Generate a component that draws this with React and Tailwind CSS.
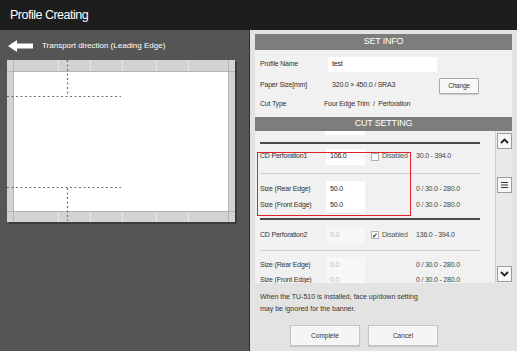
import React from 'react';

const font = { fontFamily: '"Liberation Sans", Arial, sans-serif' };

const Arrow = () => (
  <svg width="25" height="12" viewBox="0 0 25 12">
    <polygon points="0,6 9,0 9,3.5 25,3.5 25,8.5 9,8.5 9,12" fill="#fff" />
  </svg>
);

const Paper = () => (
  <svg width="231" height="165" viewBox="0 0 231 165">
    <rect x="2" y="2" width="228" height="162" fill="#3c3c3c" />
    <rect x="0" y="0" width="228" height="162" fill="#fff" />
    <rect x="0" y="0" width="228" height="11" fill="#d3d3d3" />
    <rect x="0" y="152" width="228" height="10" fill="#d3d3d3" />
    <rect x="0" y="0" width="7" height="162" fill="#d3d3d3" />
    <rect x="221" y="0" width="7" height="162" fill="#d3d3d3" />
    <line x1="0" y1="11.5" x2="228" y2="11.5" stroke="#b4b4b4" />
    <line x1="0" y1="151.5" x2="228" y2="151.5" stroke="#b4b4b4" />
    <line x1="6.5" y1="0" x2="6.5" y2="162" stroke="#b4b4b4" />
    <line x1="221.5" y1="0" x2="221.5" y2="162" stroke="#b4b4b4" />
    {[51, 83, 115, 149, 181].map((x) => (
      <line key={x} x1={x + 0.5} y1="0" x2={x + 0.5} y2="11" stroke="#e8e8e8" />
    ))}
    {[51, 83, 115, 149, 181].map((x) => (
      <line key={'b' + x} x1={x + 0.5} y1="152" x2={x + 0.5} y2="162" stroke="#e8e8e8" />
    ))}
    <g stroke="#6e6e6e" strokeWidth="1.2" strokeDasharray="2 2.5" fill="none">
      <line x1="60.5" y1="0" x2="60.5" y2="36" />
      <line x1="0" y1="36.5" x2="114" y2="36.5" />
      <line x1="0" y1="127.5" x2="114" y2="127.5" />
      <line x1="60.5" y1="128" x2="60.5" y2="161" />
    </g>
  </svg>
);

const Chevron = ({ down }) => (
  <svg width="9" height="6" viewBox="0 0 9 6">
    <polyline
      points={down ? '1,1 4.5,4.5 8,1' : '1,5 4.5,1.5 8,5'}
      fill="none"
      stroke="#222"
      strokeWidth="1.8"
    />
  </svg>
);

const Grip = () => (
  <svg width="7" height="6" viewBox="0 0 7 6">
    <g stroke="#333" strokeWidth="1">
      <line x1="0" y1="0.5" x2="7" y2="0.5" />
      <line x1="0" y1="3" x2="7" y2="3" />
      <line x1="0" y1="5.5" x2="7" y2="5.5" />
    </g>
  </svg>
);

const Field = ({ value, disabled }) => (
  <div
    className={`w-[39px] h-[16px] flex items-center pl-[4px] ${
      disabled ? 'bg-[#f7f7f7] text-[#bdbdbd]' : 'bg-white text-[#222]'
    }`}
  >
    {value}
  </div>
);

const Check = ({ checked }) => (
  <div className="flex items-center ml-[6px] w-[45px]">
    <div className="w-[8px] h-[8px] border border-[#b0b0b0] bg-white flex items-center justify-center text-[7px] leading-none text-[#333]">
      {checked ? '✔' : ''}
    </div>
    <span className="ml-[3px] text-[#555]">Disabled</span>
  </div>
);

const Row = ({ label, value, disabled, check, checked, range, h = 'h-[16px]' }) => (
  <div className={`flex items-center ${h} pl-[5px] text-[7px] tracking-[-0.2px]`}>
    <span className="w-[66px] text-[#333] whitespace-nowrap">{label}</span>
    <Field value={value} disabled={disabled} />
    {check ? <Check checked={checked} /> : <div className="w-[51px]" />}
    <span className="text-[#444] whitespace-nowrap">{range}</span>
  </div>
);

export default function App() {
  return (
    <div className="w-[517px] h-[351px] flex flex-col overflow-hidden" style={font}>
      <div className="h-[30px] bg-[#1d1d1d] flex items-center px-[10px] text-white text-[12.5px] tracking-[-0.5px]">
        Profile Creating
      </div>
      <div className="flex-1 flex min-h-0">
        {/* left: preview */}
        <div className="w-[249px] bg-[#555555] pt-[10px] pl-[7px]">
          <div className="flex items-center h-[12px] pl-[1px]">
            <Arrow />
            <span className="ml-[9px] text-white text-[8px]">Transport direction (Leading Edge)</span>
          </div>
          <div className="mt-[8px]">
            <Paper />
          </div>
        </div>
        <div className="w-px bg-[#2e2e2e]" />

        {/* right: settings */}
        <div className="flex-1 bg-[#e3e3e3] pt-[4px] px-[5px] flex flex-col">
          <div className="h-[16px] bg-[#7d7d7d] text-white text-[9px] tracking-[-0.2px] flex items-center justify-center">
            SET INFO
          </div>
          <div className="h-[67px] bg-[#f1f1f1] pl-[5px] text-[7px] tracking-[-0.2px] text-[#333] flex flex-col pt-[6px]">
            <div className="flex items-center h-[16px]">
              <span className="w-[68px]">Profile Name</span>
              <div className="w-[109px] h-[15px] bg-white flex items-center pl-[4px] text-[#222]">test</div>
            </div>
            <div className="flex items-center h-[17px] mt-[5px]">
              <span className="w-[72px]">Paper Size[mm]</span>
              <span className="w-[107px]">320.0 × 450.0 / SRA3</span>
              <div className="w-[40px] h-[16px] border border-[#aaa] bg-[#f7f7f7] rounded-[1px] flex items-center justify-center text-[6.5px] text-[#333] shadow-[0_1px_1px_rgba(0,0,0,0.15)]">
                Change
              </div>
            </div>
            <div className="flex items-center h-[12px] mt-[4px]">
              <span className="w-[64px]">Cut Type</span>
              <span>Four Edge Trim&nbsp;&nbsp;/&nbsp;&nbsp;Perforation</span>
            </div>
          </div>
          <div className="h-[14px] bg-[#7d7d7d] text-white text-[9px] tracking-[-0.2px] flex items-center justify-center">
            CUT SETTING
          </div>

          <div className="h-[152px] flex bg-[#f1f1f1] overflow-hidden">
            <div className="flex-1 relative overflow-hidden">
              <div className="h-[4px] ml-[70px] w-[40px] bg-white" />
              <div className="mt-[7px] mx-[5px] mr-[15px] h-[2px] bg-[#4a4a4a]" />
              <div className="relative">
                <div className="mt-[4px]">
                  <Row label="CD Perforation1" value="106.0" check range="30.0 - 394.0" h="h-[17px]" />
                </div>
                <div className="mt-[8px] ml-[5px] mr-[15px] h-px bg-[#d0d0d0]" />
                <div className="mt-[7px]">
                  <Row label="Size (Rear Edge)" value="50.0" range="0 / 30.0 - 280.0" />
                  <Row label="Size (Front Edge)" value="50.0" range="0 / 30.0 - 280.0" />
                </div>
                <div className="absolute left-[2px] top-[4px] w-[154px] h-[64px] border border-[#e0212b]" />
              </div>
              <div className="mt-[5px] mx-[5px] mr-[15px] h-[2px] bg-[#4a4a4a]" />
              <div className="mt-[7px]">
                <Row label="CD Perforation2" value="0.0" disabled check checked range="136.0 - 394.0" />
              </div>
              <div className="mt-[7px] ml-[5px] mr-[15px] h-px bg-[#d0d0d0]" />
              <div className="mt-[6px]">
                <Row label="Size (Rear Edge)" value="0.0" disabled range="0 / 30.0 - 280.0" />
                <Row label="Size (Front Edge)" value="0.0" disabled range="0 / 30.0 - 280.0" h="h-[15px]" />
              </div>
            </div>
            <div className="w-[17px] bg-[#e9e9e9] border-l border-[#cfcfcf] flex flex-col items-center pt-[2px] pb-[1px]">
              <div className="w-[15px] h-[16px] bg-[#f6f6f6] border border-[#9c9c9c] flex items-center justify-center">
                <Chevron />
              </div>
              <div className="mt-[28px] w-[15px] h-[16px] bg-[#f6f6f6] border border-[#9c9c9c] flex items-center justify-center">
                <Grip />
              </div>
              <div className="flex-1" />
              <div className="w-[15px] h-[16px] bg-[#f6f6f6] border border-[#9c9c9c] flex items-center justify-center">
                <Chevron down />
              </div>
            </div>
          </div>

          <div className="pl-[5px] mt-[8px] text-[7px] leading-[12px] text-[#333]">
            <div>When the TU-510 is installed, face up/down setting</div>
            <div>may be ignored for the banner.</div>
          </div>
          <div className="flex mt-[10px] ml-[35px] gap-[8px]">
            <div className="w-[70px] h-[21px] bg-[#f5f5f5] border border-[#c4c4c4] flex items-center justify-center text-[6.5px] text-[#333] shadow-[0_1px_1px_rgba(0,0,0,0.12)]">
              Complete
            </div>
            <div className="w-[70px] h-[21px] bg-[#f5f5f5] border border-[#c4c4c4] flex items-center justify-center text-[6.5px] text-[#333] shadow-[0_1px_1px_rgba(0,0,0,0.12)]">
              Cancel
            </div>
          </div>
        </div>
      </div>
    </div>
  );
}
